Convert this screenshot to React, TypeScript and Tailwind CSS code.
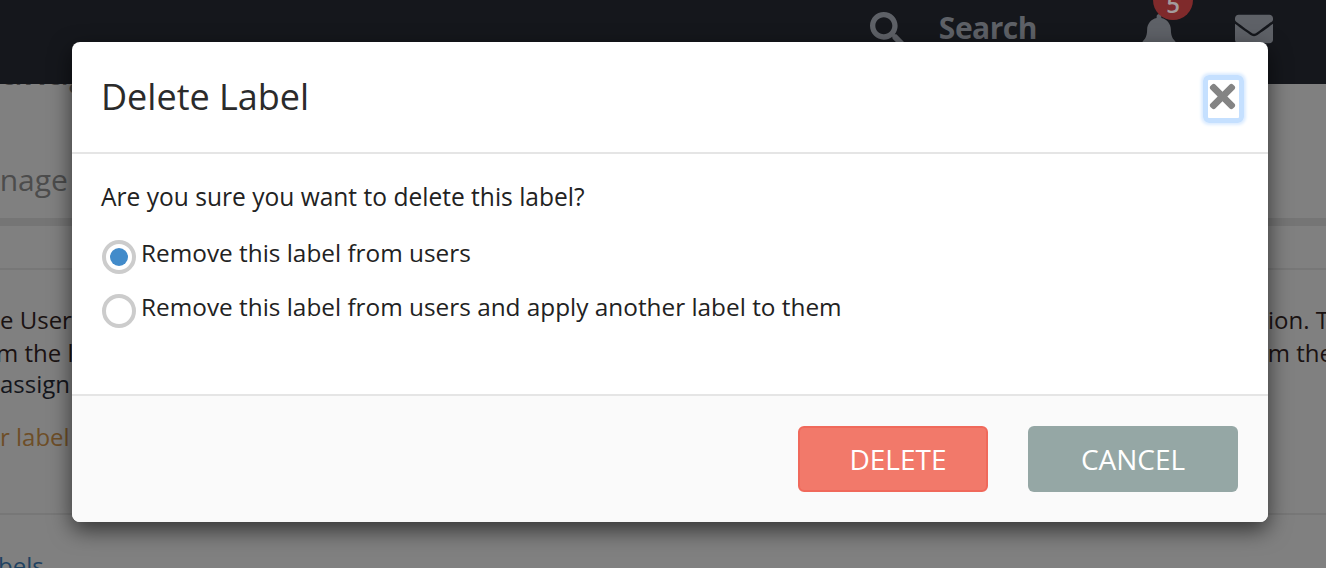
import { FaBell, FaEnvelope, FaSearch, FaTimes } from 'react-icons/fa';

function Radio({ checked, label }: { checked?: boolean; label: string }) {
  return (
    <label className="flex items-start h-[54px]">
      <span className="mt-[2px] flex items-center justify-center w-[34px] h-[34px] rounded-full border-[4px] border-[#cccccc] bg-white shrink-0">
        {checked && <span className="w-[18px] h-[18px] rounded-full bg-[#428bca]" />}
      </span>
      <span className="ml-[5px] mt-[1px] text-[24.35px] leading-[28px] text-[#222222] whitespace-nowrap">{label}</span>
    </label>
  );
}

function Backdrop() {
  return (
    <div className="h-[568px] overflow-hidden bg-[#808080]">
      {/* Top nav */}
      <div className="h-[84px] bg-[#15171c] flex items-start text-[#5e6167]">
        <div className="ml-auto flex items-start">
          <FaSearch className="mt-[12px] w-[34px] h-[34px]" />
          <span className="ml-[35px] mt-[7px] text-[30px] leading-[42px] font-bold tracking-[-0.5px]">Search</span>
          <div className="relative ml-[105px] w-[34px] mt-[14px]">
            <FaBell className="w-[34px] h-[38px]" />
            <span className="absolute -top-[34px] left-[11px] w-[40px] h-[40px] rounded-full bg-[#7f2a2b] text-[#a49c9c] text-[24px] font-semibold flex items-end justify-center leading-[32px]">5</span>
          </div>
          <FaEnvelope className="ml-[59px] mr-[53px] mt-[10px] w-[38px] h-[38px]" />
        </div>
      </div>
      {/* Page heading */}
      <div className="h-[134px] overflow-hidden">
        <p className="text-[#454545] text-[38px] leading-[40px] font-semibold -mt-[34px] ml-[-34px] whitespace-nowrap">Manage</p>
        <p className="text-[#4c4c4c] text-[30px] leading-[36px] mt-[72px] ml-[-44px] whitespace-nowrap">Manage</p>
      </div>
      <div className="h-[8px] bg-[#757575]" />
      <div className="h-[44px] border-b-2 border-[#777777]" />
      {/* Page copy */}
      <div className="pt-[33px] text-[24px] leading-[33px] text-[#1a1212]">
        <div className="flex justify-between whitespace-nowrap">
          <span>e User</span>
          <span className="-mr-[3px]">ion. T</span>
        </div>
        <div className="flex justify-between whitespace-nowrap">
          <span className="-ml-[4px]">m the l</span>
          <span className="-mr-[7px]">m the</span>
        </div>
        <div className="-mt-[2px] whitespace-nowrap text-[#14161c]">assign</div>
        <div className="mt-[20px] whitespace-nowrap text-[#6e4e27]">r label</div>
      </div>
      <div className="mt-[60px] border-t-2 border-[#777777] pt-[34px] text-[24px] leading-[33px] text-[#1f4261] -ml-[2px]">bels</div>
    </div>
  );
}

export default function App() {
  return (
    <div className="relative w-[1326px] h-[568px] overflow-hidden font-['Open_Sans',sans-serif]">
      <Backdrop />
      <div className="absolute left-[72px] top-[42px] w-[1196px] h-[480px] rounded-[8px] bg-white overflow-hidden shadow-[0_8px_22px_rgba(0,0,0,0.6)] flex flex-col">
        <div className="h-[112px] border-b-2 border-[#e5e5e5] flex items-start justify-between pl-[29px] pr-[24px] shrink-0">
          <h4 className="mt-[30px] text-[36px] leading-[50px] text-[#2b2b2b]">Delete Label</h4>
          <button
            type="button"
            className="mt-[33px] w-[41px] h-[48px] rounded-[6px] border-[5px] border-[#c5e0ff] shadow-[0_0_3px_2px_#dcecff] flex items-start justify-center text-[#848484]"
          >
            <FaTimes className="shrink-0 w-[33px] h-[37px] -mt-[2px] -ml-[2px]" />
          </button>
        </div>
        <div className="h-[240px] px-[30px] shrink-0">
          <p className="mt-[27px] mb-[25px] -ml-[1px] text-[24.55px] leading-[32px] text-[#222222]">Are you sure you want to delete this label?</p>
          <Radio checked label="Remove this label from users" />
          <Radio label="Remove this label from users and apply another label to them" />
        </div>
        <div className="flex-1 border-t-2 border-[#e5e5e5] bg-[#fafafa] flex justify-end items-start gap-[40px] pt-[30px] pr-[30px]">
          <button type="button" className="w-[190px] h-[66px] rounded-[6px] border-2 border-[#f0695b] bg-[#f2796a] text-white text-[28px] leading-[36px] pl-[10px]">DELETE</button>
          <button type="button" className="w-[210px] h-[66px] rounded-[6px] bg-[#95a7a5] text-white text-[28px] leading-[36px]">CANCEL</button>
        </div>
      </div>
    </div>
  );
}
